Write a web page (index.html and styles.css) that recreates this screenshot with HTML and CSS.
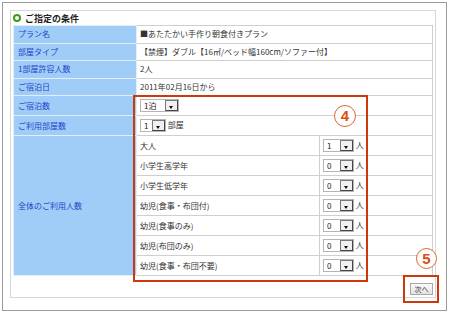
FILE: index.html
```html
<!DOCTYPE html>
<html lang="ja">
<head>
    <meta charset="UTF-8">
    <title>ご指定の条件</title>
    <link rel="stylesheet" href="styles.css">
</head>
<body>
    <div class="frame">
        <div class="panel">
            <div class="head">
                <svg class="dot" width="8" height="8" viewBox="0 0 8 8"><circle cx="4" cy="4" r="3" fill="#fff" stroke="#3f9a1e" stroke-width="2"/></svg>
                <span>ご指定の条件</span>
            </div>
            <table class="cond">
                <tr class="s"><th>プラン名</th><td colspan="2">■あたたかい手作り朝食付きプラン</td></tr>
                <tr class="s"><th>部屋タイプ</th><td colspan="2">【禁煙】ダブル【16㎡/ベッド幅160cm/ソファー付】</td></tr>
                <tr class="s"><th>1部屋許容人数</th><td colspan="2">2人</td></tr>
                <tr class="s"><th>ご宿泊日</th><td colspan="2">2011年02月16日から</td></tr>
                <tr class="t"><th>ご宿泊数</th><td colspan="2"><span class="sel stay"><span class="val">1泊</span><span class="arr"></span></span></td></tr>
                <tr class="t"><th>ご利用部屋数</th><td colspan="2"><span class="sel room"><span class="val">1</span><span class="arr"></span></span> 部屋</td></tr>
                <tr class="t"><th rowspan="7">全体のご利用人数</th><td class="sub">大人</td><td class="cnt"><span class="sel num"><span class="val">1</span><span class="arr"></span></span> 人</td></tr>
                <tr class="t"><td class="sub">小学生高学年</td><td class="cnt"><span class="sel num"><span class="val">0</span><span class="arr"></span></span> 人</td></tr>
                <tr class="t"><td class="sub">小学生低学年</td><td class="cnt"><span class="sel num"><span class="val">0</span><span class="arr"></span></span> 人</td></tr>
                <tr class="t"><td class="sub">幼児(食事・布団付)</td><td class="cnt"><span class="sel num"><span class="val">0</span><span class="arr"></span></span> 人</td></tr>
                <tr class="t"><td class="sub">幼児(食事のみ)</td><td class="cnt"><span class="sel num"><span class="val">0</span><span class="arr"></span></span> 人</td></tr>
                <tr class="t"><td class="sub">幼児(布団のみ)</td><td class="cnt"><span class="sel num"><span class="val">0</span><span class="arr"></span></span> 人</td></tr>
                <tr class="t"><td class="sub">幼児(食事・布団不要)</td><td class="cnt"><span class="sel num"><span class="val">0</span><span class="arr"></span></span> 人</td></tr>
            </table>
            <div class="foot"><button class="next">次へ</button></div>
        </div>

        <!-- 説明用の注釈 -->
        <div class="mark box4"></div>
        <div class="circle c4">4</div>
        <div class="mark box5"></div>
        <div class="circle c5">5</div>
    </div>
</body>
</html>
```

FILE: styles.css
```css
*{
    margin: 0;
    padding: 0;
    box-sizing: border-box;
}

body{
    background-color: #fff;
    font-family: "Noto Sans CJK JP", "Noto Sans", sans-serif;
    font-size: 8px;
    color: #333;
}

.frame{
    position: relative;
    margin: 2px 0 0 2px;
    width: 445px;
    height: 309px;
    border: 1px solid #9a9a9a;
    padding: 7px;
}

.panel{
    width: 426px;
    height: 288px;
    border: 1px solid #d6d6d6;
    padding: 0 2px;
}

.head{
    height: 14px;
    display: flex;
    align-items: center;
    gap: 4px;
    font-size: 9px;
    font-weight: bold;
    color: #222;
}

.dot{
    display: block;
}

.cond{
    width: 420px;
    border-collapse: collapse;
}

.cond th,
.cond td{
    border: 1px solid #cfcfcf;
    padding: 0 3px;
    text-align: left;
    vertical-align: middle;
    white-space: nowrap;
    line-height: 10px;
}

.cond th{
    width: 123px;
    padding-left: 4px;
    background-color: #9fcdf8;
    color: #1f46c8;
    font-weight: normal;
    border-color: #e4eef8;
}

.cond .sub{
    width: 183px;
}

.cond tr.s{
    height: 17.5px;
}

.cond tr.t{
    height: 20px;
}

.sel{
    display: inline-flex;
    vertical-align: middle;
    height: 13px;
    border: 1px solid #b5b5b5;
    background-color: #fff;
}

.sel .val{
    flex: 1;
    padding-left: 3px;
    line-height: 11px;
    font-size: 8px;
    color: #222;
}

.sel .arr{
    position: relative;
    width: 13px;
    border: 1px solid #444;
    border-top-color: #7a7a7a;
    border-left-color: #7a7a7a;
    background-color: #f0f0f0;
}

.sel .arr::after{
    content: "";
    position: absolute;
    left: 3px;
    top: 5px;
    border-left: 2.5px solid transparent;
    border-right: 2.5px solid transparent;
    border-top: 3px solid #111;
}

.stay{
    width: 39px;
}

.room{
    width: 26px;
}

.num{
    width: 31px;
}

.foot{
    display: flex;
    justify-content: flex-end;
    padding-top: 7px;
}

.next{
    width: 23px;
    height: 12px;
    font-family: "Noto Sans CJK JP", sans-serif;
    font-size: 7px;
    line-height: 10px;
    color: #333;
    border: 1px solid #a8a8a8;
    background: linear-gradient(#fbfbfb, #e2e2e2);
}

.mark{
    position: absolute;
    border: 2px solid #cc3a0c;
}

.box4{
    left: 130px;
    top: 92px;
    width: 235px;
    height: 187px;
}

.box5{
    left: 400px;
    top: 272px;
    width: 36px;
    height: 28px;
}

.circle{
    position: absolute;
    width: 22px;
    height: 22px;
    border: 1px solid #e0662a;
    border-radius: 50%;
    background-color: #fff;
    color: #dd4e10;
    font-family: "Liberation Sans", sans-serif;
    font-weight: bold;
    font-size: 15px;
    line-height: 20px;
    text-align: center;
}

.c4{
    left: 331px;
    top: 102px;
}

.c5{
    left: 413px;
    top: 245px;
    width: 21px;
    height: 21px;
    line-height: 19px;
}
```
